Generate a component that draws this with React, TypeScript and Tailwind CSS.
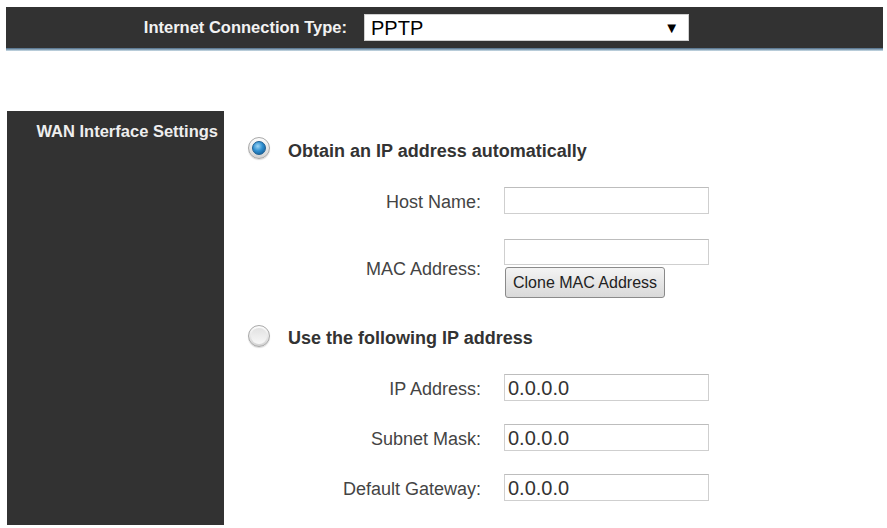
import React from "react";

type RadioProps = { checked?: boolean };

const Radio = ({ checked }: RadioProps) => {
  return (
    <div className="w-[22px] h-[22px] rounded-full border border-[#a9a9a9] bg-gradient-to-b from-[#fdfdfd] to-[#d2d2d2] flex items-center justify-center shadow-[0_1px_1px_rgba(0,0,0,0.15)]">
      {checked ? (
        <div className="w-[14px] h-[14px] rounded-full bg-[radial-gradient(circle_at_40%_35%,#9fd6f5_0%,#2f8fd0_45%,#0c4f86_100%)] border border-[#1d5f93]" />
      ) : (
        <div className="w-[16px] h-[16px] rounded-full bg-gradient-to-b from-[#e2e2e2] to-[#f7f7f7]" />
      )}
    </div>
  );
};

type FieldProps = { label: string; value?: string };

const Field = ({ label, value }: FieldProps) => {
  return (
    <div className="flex items-center">
      <div className="w-[257px] h-[27px] pt-[3px] leading-[24px] text-right text-[18px] text-[#444]">
        {label}
      </div>
      <input
        readOnly
        value={value ?? ""}
        className="ml-[23px] w-[205px] h-[27px] border border-[#cfcfcf] border-t-[#bdbdbd] bg-white px-[3px] text-[20px] text-[#333] outline-none"
      />
    </div>
  );
};

export default function App() {
  return (
    <div
      className="w-[887px] h-[528px] bg-white overflow-hidden"
      style={{ fontFamily: '"Liberation Sans", Arial, sans-serif' }}
    >
      {/* Top bar */}
      <div className="pt-[7px] pl-[6px] pr-[4px]">
        <div className="h-[41px] bg-[#323232] flex items-center">
          <div className="w-[341px] text-right text-[16.5px] font-bold text-[#f2f2f2]">
            Internet Connection Type:
          </div>
          <div className="ml-[17px] w-[325px] h-[27px] bg-white border border-[#d0d0d0] flex items-center justify-between pl-[6px] pr-[9px]">
            <span className="text-[20px] text-black leading-none">PPTP</span>
            <span className="text-[15px] text-black leading-none">▼</span>
          </div>
        </div>
        <div className="h-[3px] bg-gradient-to-b from-[#4a6984] to-[#cfe0ea]" />
      </div>

      {/* Body */}
      <div className="mt-[60px] flex">
        <div className="ml-[7px] w-[217px] h-[414px] bg-[#323232] pt-[8px] pr-[6px] text-right">
          <span className="text-[16.5px] font-bold text-[#eeeeee]">WAN Interface Settings</span>
        </div>

        <div className="flex flex-col">
          <div className="mt-[25px] pl-[24px] flex items-center h-[24px]">
            <Radio checked />
            <span className="ml-[18px] mt-[6px] text-[18px] font-bold text-[#333]">
              Obtain an IP address automatically
            </span>
          </div>

          <div className="mt-[27px]">
            <Field label="Host Name:" />
          </div>

          <div className="mt-[25px] flex items-center">
            <div className="w-[257px] pt-[2px] text-right text-[18px] text-[#444]">MAC Address:</div>
            <div className="ml-[23px] flex flex-col items-start">
              <input
                readOnly
                value=""
                className="w-[205px] h-[26px] border border-[#cfcfcf] border-t-[#bdbdbd] bg-white outline-none"
              />
              <button className="mt-[2px] ml-[1px] w-[160px] h-[31px] rounded-[3px] border border-[#8a8a8a] bg-gradient-to-b from-[#f4f4f4] to-[#d9d9d9] text-[16px] text-[#222]">
                Clone MAC Address
              </button>
            </div>
          </div>

          <div className="mt-[26px] pl-[24px] flex items-center h-[24px]">
            <Radio />
            <span className="ml-[18px] mt-[5px] text-[18px] font-bold text-[#333]">
              Use the following IP address
            </span>
          </div>

          <div className="mt-[26px]">
            <Field label="IP Address:" value="0.0.0.0" />
          </div>
          <div className="mt-[23px]">
            <Field label="Subnet Mask:" value="0.0.0.0" />
          </div>
          <div className="mt-[23px]">
            <Field label="Default Gateway:" value="0.0.0.0" />
          </div>
        </div>
      </div>
    </div>
  );
}
